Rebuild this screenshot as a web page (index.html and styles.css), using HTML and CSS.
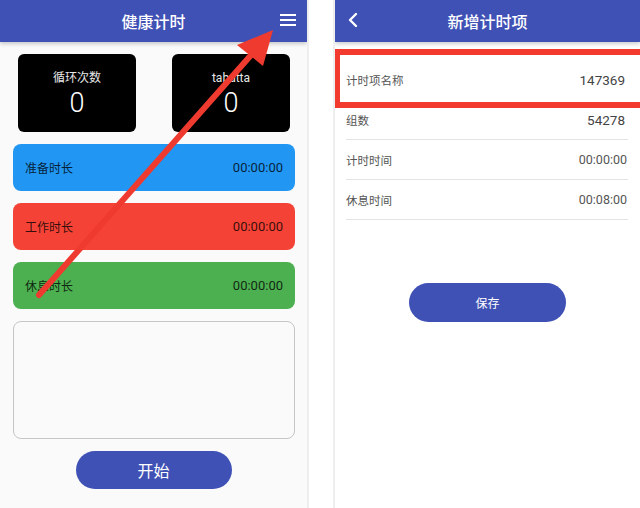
FILE: index.html
```html
<!DOCTYPE html>
<html lang="zh-CN">
<head>
  <meta charset="UTF-8" />
  <meta name="viewport" content="width=device-width, initial-scale=1.0"/>
  <title>健康计时</title>
  <link rel="stylesheet" href="styles.css">
</head>
<body>

  <div class="screens">

    <!-- 左边：主页 -->
    <div class="phone phone-home">
      <div class="appbar">
        <span class="appbar-title">健康计时</span>
        <svg class="menu-icon" width="16" height="12" viewBox="0 0 16 12">
          <rect x="0" y="0" width="16" height="2" fill="#fff"/>
          <rect x="0" y="5" width="16" height="2" fill="#fff"/>
          <rect x="0" y="10" width="16" height="2" fill="#fff"/>
        </svg>
      </div>

      <div class="home-body">
        <div class="counters">
          <div class="counter">
            <div class="counter-label">循环次数</div>
            <div class="counter-num">0</div>
          </div>
          <div class="counter">
            <div class="counter-label">tabatta</div>
            <div class="counter-num">0</div>
          </div>
        </div>

        <div class="bar bar-prepare">
          <span>准备时长</span>
          <span class="bar-time">00:00:00</span>
        </div>
        <div class="bar bar-work">
          <span>工作时长</span>
          <span class="bar-time">00:00:00</span>
        </div>
        <div class="bar bar-rest">
          <span>休息时长</span>
          <span class="bar-time">00:00:00</span>
        </div>

        <div class="log-box"></div>

        <button class="btn btn-start">开始</button>
      </div>
    </div>

    <!-- 右边：新增计时项 -->
    <div class="phone phone-add">
      <div class="appbar">
        <svg class="back-icon" width="12" height="16" viewBox="0 0 12 16">
          <path d="M9 2 L3 8 L9 14" fill="none" stroke="#fff" stroke-width="2.4" stroke-linecap="round" stroke-linejoin="round"/>
        </svg>
        <span class="appbar-title">新增计时项</span>
      </div>

      <div class="form-list">
        <div class="form-row">
          <span>计时项名称</span>
          <span class="form-val big">147369</span>
        </div>
        <div class="form-row">
          <span>组数</span>
          <span class="form-val big">54278</span>
        </div>
        <div class="form-row">
          <span>计时时间</span>
          <span class="form-val">00:00:00</span>
        </div>
        <div class="form-row">
          <span>休息时间</span>
          <span class="form-val">00:08:00</span>
        </div>
      </div>

      <button class="btn btn-save">保存</button>

      <div class="mark-box"></div>
    </div>

  </div>

  <!-- 标注箭头 -->
  <svg class="mark-arrow" width="640" height="508" viewBox="0 0 640 508">
    <line x1="39" y1="295" x2="252" y2="54" stroke="#ef3b2f" stroke-width="6" stroke-linecap="round"/>
    <polygon points="273,30 237,45 263,66" fill="#ef3b2f"/>
  </svg>

</body>
</html>
```

FILE: styles.css
```css
body {
  margin: 0;
  padding: 0;
  width: 640px;
  height: 508px;
  overflow: hidden;
  background: #fff;
  font-family: Roboto, "Noto Sans CJK SC", sans-serif;
  position: relative;
}

.screens {
  display: flex;
  justify-content: space-between;
  height: 508px;
}

.phone {
  position: relative;
  height: 508px;
  overflow: hidden;
}

.phone-home {
  width: 307px;
  background: #fafafa;
  border-right: 2px solid #eeeeee;
}

.phone-add {
  width: 305px;
  background: #fff;
  border-left: 2px solid #eeeeee;
}

.appbar {
  height: 42px;
  background: #3f51b5;
  display: flex;
  align-items: center;
  justify-content: center;
  position: relative;
  box-shadow: 0 2px 4px rgba(0, 0, 0, 0.2);
}

.appbar-title {
  color: #fff;
  font-size: 16px;
  font-weight: 500;
}

.menu-icon {
  position: absolute;
  right: 11px;
  top: 14px;
}

.back-icon {
  position: absolute;
  left: 12px;
  top: 12px;
}

/* 主页 */
.home-body {
  padding: 12px 12px 0 13px;
  display: flex;
  flex-direction: column;
  gap: 12px;
}

.counters {
  display: flex;
  justify-content: space-between;
  padding: 0 5px;
}

.counter {
  width: 118px;
  height: 78px;
  background: #000;
  border-radius: 6px;
  color: #fff;
  text-align: center;
  box-sizing: border-box;
  padding-top: 16px;
}

.counter-label {
  font-size: 12px;
  color: #e8e8e8;
  line-height: 16px;
}

.counter-num {
  font-size: 27px;
  font-weight: 300;
  line-height: 32px;
  margin-top: 1px;
}

.bar {
  height: 47px;
  border-radius: 8px;
  display: flex;
  align-items: center;
  justify-content: space-between;
  padding: 0 12px;
  font-size: 12px;
  color: rgba(0, 0, 0, 0.8);
}

.bar-time {
  font-size: 13px;
}

.bar-prepare { background: #2196f3; }
.bar-work { background: #f44336; }
.bar-rest { background: #4caf50; }

.log-box {
  height: 118px;
  box-sizing: border-box;
  border: 1.5px solid #c6c6c6;
  border-radius: 8px;
  background: #fafafa;
}

.btn {
  border: none;
  background: #3f51b5;
  color: #fff;
  border-radius: 20px;
  font-family: Roboto, "Noto Sans CJK SC", sans-serif;
  align-self: center;
  cursor: pointer;
}

.btn-start {
  width: 156px;
  height: 38px;
  font-size: 16px;
  margin-left: -1px;
}

/* 新增计时项 */
.form-list {
  margin-top: 18px;
  padding: 0 12px 0 11px;
}

.form-row {
  height: 39px;
  border-bottom: 1px solid #e3e3e3;
  display: flex;
  align-items: center;
  justify-content: space-between;
  font-size: 11.5px;
  color: #555;
}

.form-row:first-child {
  border-bottom-color: transparent;
}

.form-val {
  font-size: 12.5px;
  color: #555;
  margin-right: 1px;
}

.form-val.big {
  font-size: 13.5px;
  color: #444;
  margin-right: 3px;
}

.btn-save {
  display: block;
  margin: 63px auto 0;
  width: 157px;
  height: 39px;
  font-size: 12px;
}

.mark-box {
  position: absolute;
  left: -1px;
  top: 49px;
  width: 320px;
  height: 59px;
  box-sizing: border-box;
  border: 6px solid #f33a2f;
}

.mark-arrow {
  position: absolute;
  left: 0;
  top: 0;
  pointer-events: none;
}
```
